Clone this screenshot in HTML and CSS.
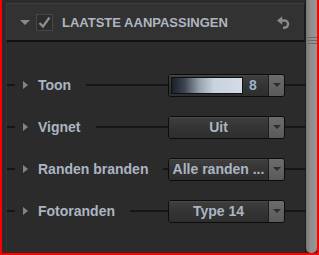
FILE: index.html
```html
<!DOCTYPE html>
<html>
<head>
<meta charset="utf-8">
<link rel="stylesheet" href="styles.css">
</head>
<body>
<div class="frame">
  <div class="panel">
    <div class="header">
      <span class="tri-down"></span>
      <span class="check">
        <svg width="17" height="17" viewBox="0 0 17 17"><path d="M3.5 9 L7 12.5 L13.5 3.5" fill="none" stroke="#8e8e8e" stroke-width="2.2"/></svg>
      </span>
      <span class="title">LAATSTE AANPASSINGEN</span>
      <span class="undo">
        <svg width="13" height="14" viewBox="0 0 13 14"><path d="M4.5 5.5 H7.5 A3.6 3.6 0 0 1 7.5 12.7 H6" fill="none" stroke="#8a8a8a" stroke-width="2.4"/><path d="M0 5.5 L5.2 1.2 L5.2 9.8 Z" fill="#8a8a8a"/></svg>
      </span>
    </div>
    <div class="body">
      <div class="row">
        <span class="lead"></span><span class="tri-right"></span>
        <span class="label">Toon</span><span class="fill"></span>
        <div class="select">
          <div class="main tone"><span class="bar"></span><span class="num">8</span></div>
          <div class="btn"><span class="caret"></span></div>
        </div>
        <span class="tail"></span>
      </div>
      <div class="row">
        <span class="lead"></span><span class="tri-right"></span>
        <span class="label">Vignet</span><span class="fill"></span>
        <div class="select">
          <div class="main">Uit</div>
          <div class="btn"><span class="caret"></span></div>
        </div>
        <span class="tail"></span>
      </div>
      <div class="row">
        <span class="lead"></span><span class="tri-right"></span>
        <span class="label">Randen branden</span><span class="fill"></span>
        <div class="select">
          <div class="main">Alle randen ...</div>
          <div class="btn"><span class="caret"></span></div>
        </div>
        <span class="tail"></span>
      </div>
      <div class="row">
        <span class="lead"></span><span class="tri-right"></span>
        <span class="label">Fotoranden</span><span class="fill"></span>
        <div class="select">
          <div class="main">Type 14</div>
          <div class="btn"><span class="caret"></span></div>
        </div>
        <span class="tail"></span>
      </div>
    </div>
  </div>
  <div class="sep"></div>
  <div class="scroll"><span class="grip"></span></div>
</div>
</body>
</html>
```
FILE: styles.css
```css
html, body { margin: 0; padding: 0; background: #2a2a2a; }
.frame {
  width: 319px; height: 255px; box-sizing: border-box;
  border: 2px solid #ff0000; border-top: 0;
  display: flex; background: #2a2a2a;
  font-family: "Liberation Sans", Arial, sans-serif; font-weight: bold;
}
.panel {
  width: 303px; box-sizing: border-box; padding: 3px 0 0 4px;
  display: flex; flex-direction: column; background: #2b2b2b;
}
.header {
  height: 39px; box-sizing: border-box; flex: none;
  background: #323232;
  border-top: 1px solid #3d3d3d; border-left: 1px solid #3a3a3a;
  border-bottom: 2px solid #111; border-right: 1px solid #1c1c1c;
  display: flex; align-items: center;
}
.tri-down {
  margin-left: 13px; width: 0; height: 0;
  border-left: 5px solid transparent; border-right: 5px solid transparent;
  border-top: 5px solid #8a8a8a;
}
.check {
  margin-left: 6px; width: 17px; height: 17px; box-sizing: border-box;
  border: 1px solid #474747; background: #2c2c2c; display: flex;
}
.check svg { margin: -1px; }
.title { margin-left: 9px; font-size: 13px; color: #aeb6c0; }
.undo { margin-left: auto; margin-right: 14px; display: flex; }
.body {
  flex: 1; border-left: 1px solid #333; padding-top: 22px;
  display: flex; flex-direction: column;
}
.row { height: 42px; display: flex; align-items: center; }
.lead { width: 8px; height: 2px; background: #161616; }
.tri-right {
  margin-left: 8px; width: 0; height: 0;
  border-top: 4.5px solid transparent; border-bottom: 4.5px solid transparent;
  border-left: 5px solid #858585;
}
.label { margin-left: 10px; font-size: 14px; color: #abb5c2; }
.fill { flex: 1; margin-left: 15px; height: 2px; background: #161616; }
.tail { width: 20px; height: 2px; background: #161616; }
.select {
  width: 117px; height: 23px; box-sizing: border-box;
  border: 1px solid #0c0c0c; border-radius: 3px;
  display: flex; overflow: hidden;
}
.main {
  flex: 1; display: flex; align-items: center; justify-content: center;
  font-size: 14px; color: #abb5c2;
  background: linear-gradient(#3f3f3f, #343434 50%, #2e2e2e);
  box-shadow: inset 0 1px 0 #484848;
}
.main.tone { justify-content: flex-start; }
.bar {
  margin-left: 2px; width: 72px; height: 17px; box-sizing: border-box;
  border: 1px solid #111;
  background: linear-gradient(to right, #1a1f2b 0%, #3e4452 18%, #9aa3b0 40%, #c9d2df 60%, #d3dbe8 100%);
}
.num { margin-left: 6px; color: #9fb3cc; }
.btn {
  width: 15px; border-left: 1px solid #1d1d1d;
  background: linear-gradient(#6c6c6c, #5a5a5a);
  display: flex; align-items: center; justify-content: center;
}
.caret {
  width: 0; height: 0;
  border-left: 4px solid transparent; border-right: 4px solid transparent;
  border-top: 4px solid #2c2c2c;
}
.sep { width: 1px; background: #1c1c1c; }
.scroll {
  width: 11px; border-radius: 0 0 5px 5px;
  background: linear-gradient(to right, #767676, #8e8e8e 40%, #979797);
  position: relative;
}
.grip {
  position: absolute; left: 1px; right: 0; top: 37px; height: 8px;
  background: repeating-linear-gradient(#6a6a6a 0 1px, transparent 1px 3px);
}
```
